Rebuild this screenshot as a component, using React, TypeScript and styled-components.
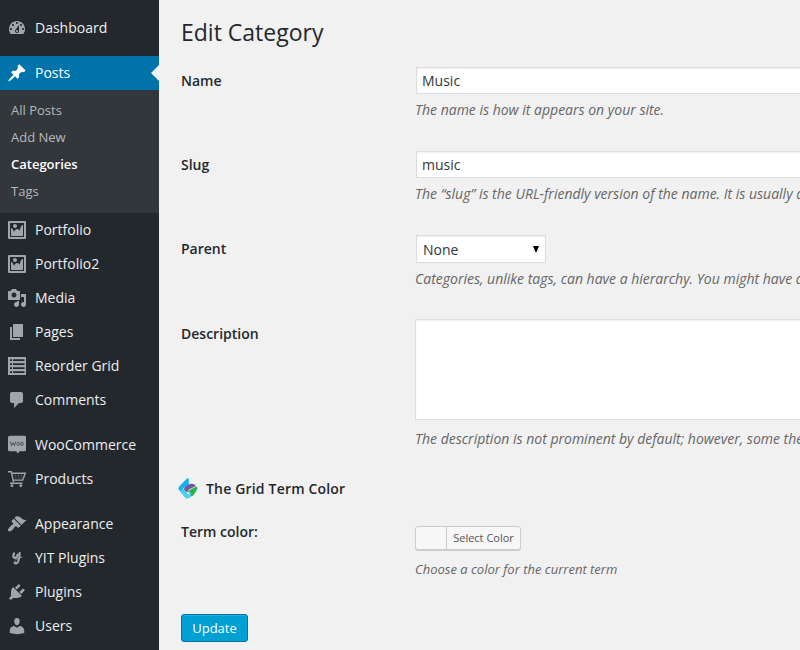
import React from "react";
import styled, { createGlobalStyle, css } from "styled-components";

const GlobalStyle = createGlobalStyle`
  *, *::before, *::after { box-sizing: border-box; }
  html, body { margin: 0; padding: 0; background: #f1f1f1; overflow: hidden; }
  body { font-family: "Open Sans", sans-serif; font-size: 14px; color: #444; }
`;

const Page = styled.div`
  display: flex;
  width: 800px;
  height: 650px;
  overflow: hidden;
  background: #f1f1f1;
`;

const Sidebar = styled.nav`
  flex: 0 0 159px;
  height: 650px;
  padding-top: 11px;
  background: #23282d;
  overflow: hidden;
`;

const MenuGroup = styled.div`
  margin-bottom: 11px;
`;

const MenuItem = styled.a<{ $active?: boolean }>`
  position: relative;
  display: flex;
  align-items: center;
  height: 34px;
  padding-left: 7px;
  color: ${(p) => (p.$active ? "#fff" : "#eee")};
  background: ${(p) => (p.$active ? "#0073aa" : "transparent")};
  ${(p) =>
    p.$active &&
    css`
      &::after {
        content: "";
        position: absolute;
        right: 0;
        top: 9px;
        border: 8px solid transparent;
        border-left-width: 0;
        border-right-color: #f1f1f1;
      }
    `}
`;

const MenuIcon = styled.svg<{ $active?: boolean }>`
  flex: none;
  width: 20px;
  height: 20px;
  margin-right: 8px;
  fill: ${(p) => (p.$active ? "#fff" : "#a0a5aa")};
`;

const MenuLabel = styled.span`
  font-size: 14px;
  line-height: 18px;
  white-space: nowrap;
`;

const Submenu = styled.div`
  height: 123px;
  padding: 7px 0 8px 11px;
  background: #32373c;
`;

const SubmenuItem = styled.a<{ $current?: boolean }>`
  display: block;
  height: 27px;
  font-size: 13px;
  line-height: 27px;
  color: ${(p) => (p.$current ? "#fff" : "#b4b9be")};
  font-weight: ${(p) => (p.$current ? 600 : 400)};
`;

const Content = styled.main`
  flex: 1;
  min-width: 0;
  padding: 17px 0 0 22px;
  overflow: hidden;
`;

const Title = styled.h1`
  margin: 0;
  height: 50px;
  font-size: 23px;
  line-height: 31px;
  font-weight: 400;
  color: #23282d;
`;

const FormRow = styled.div<{ $height: number }>`
  display: grid;
  grid-template-columns: 234px 500px;
  height: ${(p) => p.$height}px;
`;

const FieldLabel = styled.label<{ $top?: number }>`
  margin-top: ${(p) => p.$top ?? 4}px;
  font-weight: 600;
  font-size: 14px;
  line-height: 19px;
  color: #23282d;
`;

const Field = styled.div`
  display: flex;
  flex-direction: column;
  align-items: flex-start;
`;

const control = css`
  margin: 0;
  border: 1px solid #ddd;
  border-radius: 0;
  background: #fff;
  box-shadow: inset 0 1px 2px rgba(0, 0, 0, 0.07);
  color: #32373c;
  font: 400 14px "Open Sans", sans-serif;
  outline: none;
`;

const TextInput = styled.input`
  ${control}
  width: 500px;
  height: 27px;
  margin-left: 1px;
  padding: 0 5px;
`;

const TextArea = styled.textarea`
  ${control}
  display: block;
  width: 500px;
  height: 101px;
  resize: none;
`;

const SelectBox = styled.div`
  display: grid;
  align-items: center;
  margin: 0 0 0 1px;
`;

const Select = styled.select`
  ${control}
  grid-area: 1 / 1;
  width: 130px;
  height: 28px;
  padding: 0 6px;
  appearance: none;
`;

const SelectArrow = styled.svg`
  grid-area: 1 / 1;
  justify-self: end;
  width: 6px;
  height: 6px;
  margin: 0 7px 1px 0;
  fill: #000;
  z-index: 1;
`;

const Hint = styled.p<{ $top: number; $small?: boolean }>`
  margin: ${(p) => p.$top}px 0 0;
  font-size: ${(p) => (p.$small ? 13 : 14)}px;
  line-height: 21px;
  font-style: italic;
  white-space: nowrap;
  color: #666;
`;

const SectionHeading = styled.h2`
  display: flex;
  align-items: center;
  gap: 8px;
  height: 20px;
  margin: 0 0 28px -3px;
  font-size: 14px;
  font-weight: 600;
  letter-spacing: 0.18px;
  color: #23282d;
`;

const Logo = styled.svg`
  width: 20px;
  height: 22px;
`;

const ColorButton = styled.button`
  display: flex;
  align-items: stretch;
  width: 106px;
  height: 24px;
  padding: 0;
  border: 1px solid #ccc;
  border-radius: 3px;
  background: #f7f7f7;
  box-shadow: 0 1px 0 #ccc;
  overflow: hidden;
`;

const Swatch = styled.span`
  width: 31px;
  border-right: 1px solid #ccc;
`;

const ColorText = styled.span`
  flex: 1;
  font: 400 11px/22px "Open Sans", sans-serif;
  color: #555;
  text-align: center;
  white-space: nowrap;
`;

const UpdateButton = styled.button`
  display: block;
  width: 67px;
  height: 28px;
  padding: 0;
  border: 1px solid #0073aa;
  border-radius: 3px;
  background: #00a0d2;
  box-shadow: inset 0 1px 0 rgba(120, 200, 230, 0.3);
  font: 400 13px/26px "Open Sans", sans-serif;
  color: #fff;
`;

type Glyph = { d?: string; body?: React.ReactNode };

const glyphs: Record<string, Glyph> = {
  dashboard: {
    d: "M3.76 16h12.48c1.1-1.37 1.76-3.11 1.76-5 0-4.42-3.58-8-8-8s-8 3.58-8 8c0 1.89.66 3.63 1.76 5zM10 4c.55 0 1 .45 1 1s-.45 1-1 1-1-.45-1-1 .45-1 1-1zM6 6c.55 0 1 .45 1 1s-.45 1-1 1-1-.45-1-1 .45-1 1-1zm8 0c.55 0 1 .45 1 1s-.45 1-1 1-1-.45-1-1 .45-1 1-1zm-5.37 5.55L12 7v6c0 1.1-.9 2-2 2s-2-.9-2-2c0-.57.24-1.08.63-1.45zM4 10c.55 0 1 .45 1 1s-.45 1-1 1-1-.45-1-1 .45-1 1-1zm12 0c.55 0 1 .45 1 1s-.45 1-1 1-1-.45-1-1 .45-1 1-1zm-5 3c0-.55-.45-1-1-1s-1 .45-1 1 .45 1 1 1 1-.45 1-1z",
  },
  post: {
    d: "M10.44 3.02l1.82-1.82 6.36 6.35-1.83 1.82c-1.05-.68-2.48-.57-3.41.36l-.75.75c-.92.93-1.04 2.35-.35 3.41l-1.83 1.82-2.41-2.41-2.8 2.79c-.42.42-3.38 2.71-3.8 2.29s1.86-3.39 2.28-3.81l2.79-2.79L4.1 9.36l1.83-1.82c1.05.69 2.48.57 3.4-.36l.75-.75c.93-.92 1.05-2.35.36-3.41z",
  },
  image: {
    d: "M2.25 1h15.5c.69 0 1.25.56 1.25 1.25v15.5c0 .69-.56 1.25-1.25 1.25H2.25C1.56 19 1 18.44 1 17.75V2.25C1 1.56 1.56 1 2.25 1zM17 17V3H3v14h14zM10 6c0-1.1-.9-2-2-2s-2 .9-2 2 .9 2 2 2 2-.9 2-2zm3 5s0-6 3-6v10c0 .55-.45 1-1 1H5c-.55 0-1-.45-1-1V8c2 0 3 4 3 4s1-3 3-3 3 2 3 2z",
  },
  media: {
    d: "M13 11V4c0-.55-.45-1-1-1h-1.67L9 1H5L3.67 3H2c-.55 0-1 .45-1 1v7c0 .55.45 1 1 1h10c.55 0 1-.45 1-1zM7 4.5c1.38 0 2.5 1.12 2.5 2.5S8.38 9.5 7 9.5 4.5 8.38 4.5 7 5.62 4.5 7 4.5zM14 6h5v10.500c0 1.380-1.120 2.500-2.500 2.500S14 17.880 14 16.500s1.120-2.500 2.500-2.500c.17 0 .34.02.5.05V9h-3V6zm-4 8.050V13h2v3.500c0 1.380-1.120 2.500-2.500 2.500S7 17.880 7 16.500 8.120 14 9.500 14c.17 0 .34.02.5.05z",
  },
  page: { d: "M6 15V2h10v13H6zm-1 1h8v2H3V5h2v11z" },
  list: {
    d: "M1 1h18v18H1zM3 3.200v1.700h2V3.200zM6 3.200v1.700h11.500V3.200zM3 7.200v1.700h2V7.200zM6 7.200v1.700h11.500V7.200zM3 11.200v1.700h2v-1.700zM6 11.200v1.700h11.500v-1.700zM3 15.200v1.700h2v-1.700zM6 15.200v1.700h11.500v-1.700z",
  },
  comment: {
    d: "M5 2h9c1.1 0 2 .9 2 2v7c0 1.1-.9 2-2 2h-2l-5 5v-5H5c-1.1 0-2-.9-2-2V4c0-1.1.9-2 2-2z",
  },
  woo: {
    body: (
      <>
        <path d="M2.500.8h15A1.500 1.500 0 0 1 19 2.300v12.400a1.500 1.500 0 0 1-1.500 1.500H12.500l-1.300 2.300L9 16.200H2.500A1.500 1.500 0 0 1 1 14.700V2.300A1.500 1.500 0 0 1 2.500.8z" />
        <g fill="none" stroke="#50555a" strokeWidth="1">
          <path d="M3.500 6.500l1 4.300 1.600-3.200 1.400 3.200 1.100-4.300" />
          <ellipse cx="11.200" cy="8.800" rx="1.200" ry="1.700" />
          <ellipse cx="15" cy="8.800" rx="1.200" ry="1.700" />
        </g>
      </>
    ),
  },
  cart: {
    body: (
      <>
        <path
          d="M1 2.700h3.300l2.200 10.500M4.800 4.300h13.500l-2.600 6.800H6.200M3 14.300h12.500"
          fill="none"
          stroke="#a0a5aa"
          strokeWidth="1.400"
        />
        <path d="M5.500 6.600h11.500M6 8.800h10.300M8.500 5v6M11.500 5v6M14.300 5v6" fill="none" stroke="#555a5f" strokeWidth=".5" />
        <circle cx="5" cy="16.700" r="1.400" />
        <circle cx="13.800" cy="16.700" r="1.400" />
      </>
    ),
  },
  appearance: {
    d: "M14.48 11.06L7.41 3.99l1.5-1.5c.5-.56 2.3-.47 3.51.32 1.21.8 1.43 1.28 2.91 2.1 1.18.64 2.45 1.26 4.45.85zm-.71.71L6.7 4.7 4.93 6.47c-.39.39-.39 1.02 0 1.41l1.06 1.06c.39.39.39 1.03 0 1.42-.6.6-1.43 1.11-2.21 1.69-.35.26-.7.53-1.01.84C1.43 14.23.4 16.08 1.4 17.07c.99 1 2.84-.03 4.18-1.36.31-.31.58-.66.85-1.02.57-.78 1.08-1.61 1.69-2.21.39-.39 1.02-.39 1.41 0l1.06 1.06c.39.39 1.02.39 1.41 0z",
  },
  yit: {
    body: (
      <g fill="none" stroke="#a0a5aa" strokeLinecap="round">
        <path d="M7 5.500c-1 2.700-.8 4.400.5 4.400 1.500 0 2.700-1.300 3.300-3.400" strokeWidth="2.200" />
        <path d="M12.700 5c-.3 5-1 9.300-3 10.200-1.300.5-2.200 0-2-.9" strokeWidth="2.200" />
        <path d="M8.500 11.800c2.200-1.600 4.200-2.400 6.300-2.500" strokeWidth="1" />
      </g>
    ),
  },
  plugins: {
    d: "M13.11 4.36L9.87 7.6 8 5.73l3.24-3.24c.35-.34 1.05-.2 1.56.32.52.51.66 1.21.31 1.55zm-8 1.77l.91-1.12 9.01 9.01-1.19.84c-.71.71-2.63 1.16-3.82 1.16H6.14L4.9 17.26c-.59.59-1.54.59-2.12 0-.59-.58-.59-1.53 0-2.12l1.24-1.24v-3.88c0-1.13.4-3.19 1.09-3.89zm7.26 3.97l3.24-3.24c.34-.35 1.04-.21 1.55.31.52.51.66 1.21.31 1.55l-3.24 3.25z",
  },
  users: {
    d: "M10 9.25c-2.27 0-2.73-3.44-2.73-3.44C7 4.02 7.82 2 9.97 2c2.16 0 2.98 2.02 2.71 3.81 0 0-.41 3.44-2.68 3.44zm0 2.57L12.72 10c2.39 0 4.52 2.33 4.52 4.53v2.49s-3.65 1.13-7.24 1.13c-3.65 0-7.24-1.13-7.24-1.13v-2.49c0-2.25 1.94-4.48 4.47-4.48z",
  },
};

function Item({ icon, label, active }: { icon: string; label: string; active?: boolean }) {
  const glyph = glyphs[icon];
  return (
    <MenuItem $active={active}>
      <MenuIcon viewBox="0 0 20 20" $active={active}>
        {glyph.body ?? <path fillRule="evenodd" d={glyph.d} />}
      </MenuIcon>
      <MenuLabel>{label}</MenuLabel>
    </MenuItem>
  );
}

export default function App() {
  return (
    <>
      <GlobalStyle />
      <Page>
        <Sidebar>
          <MenuGroup>
            <Item icon="dashboard" label="Dashboard" />
          </MenuGroup>
          <MenuGroup>
            <Item icon="post" label="Posts" active />
            <Submenu>
              <SubmenuItem>All Posts</SubmenuItem>
              <SubmenuItem>Add New</SubmenuItem>
              <SubmenuItem $current>Categories</SubmenuItem>
              <SubmenuItem>Tags</SubmenuItem>
            </Submenu>
            <Item icon="image" label="Portfolio" />
            <Item icon="image" label="Portfolio2" />
            <Item icon="media" label="Media" />
            <Item icon="page" label="Pages" />
            <Item icon="list" label="Reorder Grid" />
            <Item icon="comment" label="Comments" />
          </MenuGroup>
          <MenuGroup>
            <Item icon="woo" label="WooCommerce" />
            <Item icon="cart" label="Products" />
          </MenuGroup>
          <MenuGroup>
            <Item icon="appearance" label="Appearance" />
            <Item icon="yit" label="YIT Plugins" />
            <Item icon="plugins" label="Plugins" />
            <Item icon="users" label="Users" />
          </MenuGroup>
        </Sidebar>
        <Content>
          <Title>Edit Category</Title>
          <FormRow $height={84}>
            <FieldLabel>Name</FieldLabel>
            <Field>
              <TextInput defaultValue="Music" />
              <Hint $top={5}>The name is how it appears on your site.</Hint>
            </Field>
          </FormRow>
          <FormRow $height={84}>
            <FieldLabel>Slug</FieldLabel>
            <Field>
              <TextInput defaultValue="music" />
              <Hint $top={5}>The “slug” is the URL-friendly version of the name. It is usually a</Hint>
            </Field>
          </FormRow>
          <FormRow $height={84}>
            <FieldLabel>Parent</FieldLabel>
            <Field>
              <SelectBox>
                <Select defaultValue="None">
                  <option>None</option>
                </Select>
                <SelectArrow viewBox="0 0 6 6">
                  <path d="M0 0h6L3.500 6h-1z" />
                </SelectArrow>
              </SelectBox>
              <Hint $top={5}>Categories, unlike tags, can have a hierarchy. You might have a</Hint>
            </Field>
          </FormRow>
          <FormRow $height={159}>
            <FieldLabel $top={5}>Description</FieldLabel>
            <Field>
              <TextArea />
              <Hint $top={8}>The description is not prominent by default; however, some the</Hint>
            </Field>
          </FormRow>
          <SectionHeading>
            <Logo viewBox="0 0 20 22">
              <path d="M9 1.600q1.500-1 1.800.6v5.300L6 10.800q-1.600 1.200 0 2.700l3 2.700v5.300q-1-.2-1.700-1L1.500 13.500q-2-2.300 0-4.600z" fill="#12b4ea" />
              <path d="M3.500 11.500q.5 1.200 2 2.500l4.500 3.500 3-2v4l-2 1.500q-1.700 1-3.400-.3l-4.600-5z" fill="#4bd3ea" />
              <path d="M6 13q-.3-2.500 2-4l3-1.700q3-1.400 5.500.2l1.500 1.500-7 3.500L9 15.500z" fill="#7058a8" />
              <path d="M9.500 14.800l4-2.800 5.200-2.600q1 1.300.4 3L16 17.500q-1.800 2.300-3 1.500v-3z" fill="#27b34b" />
            </Logo>
            The Grid Term Color
          </SectionHeading>
          <FormRow $height={88}>
            <FieldLabel $top={-4}>Term color:</FieldLabel>
            <Field>
              <ColorButton>
                <Swatch />
                <ColorText>Select Color</ColorText>
              </ColorButton>
              <Hint $top={9} $small>
                Choose a color for the current term
              </Hint>
            </Field>
          </FormRow>
          <UpdateButton>Update</UpdateButton>
        </Content>
      </Page>
    </>
  );
}
